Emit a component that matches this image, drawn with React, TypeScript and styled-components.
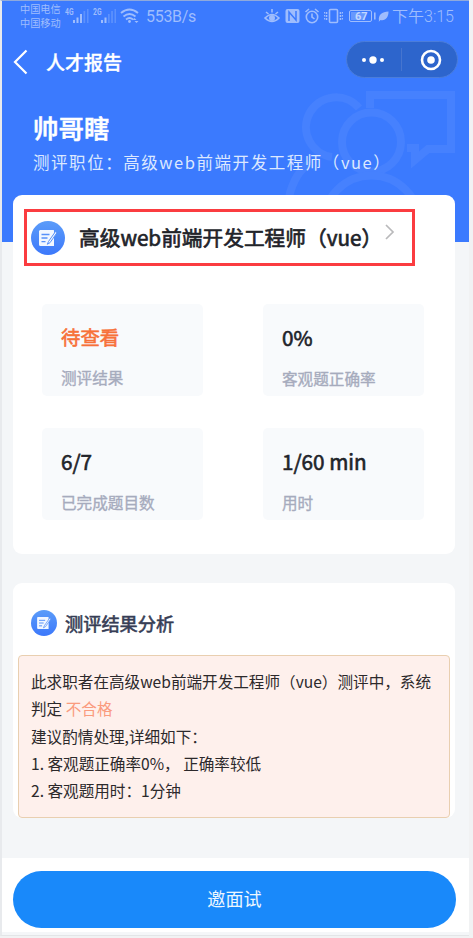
import React from 'react';
import styled, { createGlobalStyle } from 'styled-components';

const GlobalStyle = createGlobalStyle`
  * { box-sizing: border-box; }
  body {
    margin: 0;
    background: #f1f2f3;
    font-family: "Noto Sans CJK SC", sans-serif;
  }
`;

const Phone = styled.main`
  width: 469px;
  height: 936px;
  border-left: 2px solid #e8eaed;
  border-top: 1px solid #8fa9dc;
  border-bottom: 1px solid #e3e5e7;
  background: #f4f6f8;
  display: flex;
  flex-direction: column;
  white-space: nowrap;
  overflow: hidden;
`;

const Header = styled.header`
  position: relative;
  flex: none;
  height: 241px;
  background: #3b7afe;
  color: #fff;
`;

const Watermark = styled.svg`
  position: absolute;
  left: 278px;
  top: 84px;
`;

const StatusBar = styled.div`
  height: 32px;
  display: flex;
  justify-content: space-between;
  align-items: flex-start;
  padding: 0 15px 0 18px;
  color: #9fbdfd;
`;

const StatusGroup = styled.div`
  display: flex;
`;

const Carriers = styled.div`
  width: 43px;
  padding-top: 1px;
  font-size: 10.2px;
  line-height: 14px;
`;

const StatusText = styled.span<{ $light?: boolean }>`
  font-family: Roboto, "Noto Sans CJK SC", sans-serif;
  font-size: 16px;
  font-weight: ${(p) => (p.$light ? 350 : 400)};
  line-height: 31px;
  margin-left: ${(p) => (p.$light ? 0 : -1)}px;
  letter-spacing: ${(p) => (p.$light ? '0' : '-0.3px')};
`;

const NetLabel = styled.text`
  font: bold 9px Roboto, sans-serif;
`;

const NavBar = styled.nav`
  height: 58px;
  display: flex;
  align-items: center;
  padding: 0 11px 0 11px;
`;

const NavTitle = styled.h1`
  margin: 0 auto 0 18px;
  font-size: 19px;
  line-height: 28px;
  font-weight: 500;
  -webkit-text-stroke: 0.3px #fff;
`;

const Capsule = styled.div`
  width: 112px;
  height: 37px;
  margin-top: -5px;
  border: 1px solid #4b7dda;
  border-radius: 19px;
  background: #2d65cc;
`;

const Profile = styled.section`
  position: relative;
  padding: 17px 0 0 31px;
`;

const Name = styled.h2`
  margin: 0;
  font-size: 25.5px;
  line-height: 38px;
  font-weight: 500;
  -webkit-text-stroke: 0.5px #fff;
`;

const Position = styled.p`
  margin: 2px 0 0;
  font-size: 16.5px;
  line-height: 28px;
  letter-spacing: 1.55px;
  color: #dce8ff;
`;

const Card = styled.section<{ $height: number }>`
  position: relative;
  flex: none;
  width: 442px;
  height: ${(p) => p.$height}px;
  margin-left: 11px;
  border-radius: 9px;
  background: #fff;
`;

const SummaryCard = styled(Card)`
  margin-top: -47px;
  padding: 14px 0 0 11px;
`;

const JobLink = styled.div`
  width: 391px;
  height: 57px;
  border: 3px solid #fb3c40;
  padding-left: 4px;
  display: flex;
  align-items: center;
`;

const JobTitle = styled.h3`
  margin: -2px 3px 0 14px;
  font-size: 20.7px;
  line-height: 30px;
  font-weight: 400;
  color: #212329;
  -webkit-text-stroke: 0.65px #212329;
`;

const ChevronBox = styled.span`
  display: flex;
  padding-bottom: 11px;
`;

const Stats = styled.div`
  display: grid;
  grid-template-columns: 161px 161px;
  grid-auto-rows: 92px;
  gap: 32px 60px;
  margin: 38px 0 0 18px;
`;

const Stat = styled.div`
  padding: 18px 0 0 19px;
  border-radius: 5px;
  background: #f8fafc;
`;

const StatValue = styled.div<{ $accent?: boolean }>`
  font-size: ${(p) => (p.$accent ? 19.4 : 20.7)}px;
  line-height: ${(p) => (p.$accent ? 29 : 30)}px;
  color: ${(p) => (p.$accent ? '#f77139' : '#212329')};
  -webkit-text-stroke: 0.6px currentColor;
`;

const StatLabel = styled.div`
  margin-top: 14px;
  font-size: 15.6px;
  line-height: 24px;
  color: #a6abbd;
  -webkit-text-stroke: 0.35px currentColor;
`;

const AnalysisCard = styled(Card)`
  margin-top: 29px;
  padding: 26px 5px 0;
`;

const AnalysisHeading = styled.div`
  height: 28px;
  display: flex;
  align-items: center;
  gap: 8px;
  padding-left: 13px;
`;

const AnalysisTitle = styled.h3`
  margin: 0;
  font-size: 18.2px;
  line-height: 28px;
  font-weight: 400;
  color: #363d55;
  -webkit-text-stroke: 0.6px currentColor;
`;

const Notice = styled.div`
  width: 432px;
  height: 163px;
  margin-top: 18px;
  padding: 12px 0 0 12px;
  border: 1.5px solid #e9cfb0;
  border-radius: 4px;
  background: #fef0ec;
  color: #2c292b;
  font-size: 15.6px;
  line-height: 27.3px;
`;

const Verdict = styled.span`
  color: #fa9b7e;
`;

const Footer = styled.footer`
  flex: none;
  height: 74px;
  margin-top: 40px;
  padding: 13px 0 0 11px;
  background: #fff;
`;

const InviteButton = styled.button`
  display: block;
  width: 443px;
  height: 57px;
  border: 0;
  border-radius: 29px;
  background: #1989fa;
  color: #edf7ff;
  font-family: inherit;
  font-size: 18.1px;
  padding: 0 0 4px;
`;

function DocBadge({ size, id }: { size: number; id: string }) {
  return (
    <svg width={size} height={size} viewBox="0 0 34 34">
      <defs>
        <linearGradient id={id} x1="0" y1="0" x2="0" y2="1">
          <stop offset="0" stopColor="#5b9cf9" />
          <stop offset="1" stopColor="#3c78fb" />
        </linearGradient>
      </defs>
      <circle cx="17" cy="17" r="17" fill={`url(#${id})`} />
      <path d="M9 9h14l-1 1H9zM8 9.5h15v15.5H9.500q-1.500 0-1.500-1.500z" fill="#f2f7ff" />
      <path d="M10.500 13.500h8M10.500 17h6M10.500 20.700h4" stroke="#5791f9" strokeWidth="1.300" />
      <path d="M24.500 10.500l-7 10-1.200 2.800 2.700-1.600 7-10z" fill="#f2f7ff" stroke="#5791f9" strokeWidth="1" />
    </svg>
  );
}

function SignalIcons() {
  return (
    <svg width="84" height="30" viewBox="61 1 84 30" fill="currentColor">
      <NetLabel x="63" y="15" textLength="8.500" lengthAdjust="spacingAndGlyphs">4G</NetLabel>
      <path d="M71 20h2v3h-2zM74.500 17.500h2V23h-2zM78 14h2v9h-2z" />
      <path d="M81.500 11h1.700v12h-1.700zM85 9h1.500v14H85z" opacity=".35" />
      <NetLabel x="91" y="15" textLength="8.500" lengthAdjust="spacingAndGlyphs">2G</NetLabel>
      <path d="M99 20h2v3h-2zM102.500 17.500h2V23h-2z" />
      <path d="M106 14h1.700v9H106zM109.200 11h1.700v12h-1.700zM112.500 9h1.500v14h-1.500z" opacity=".35" />
      <g fill="none" stroke="currentColor" strokeWidth="1.900">
        <path d="M119 13q8.500-7 17 0M121.500 16.500q6-5 12 0M124 19.500q3.500-2.800 7 0" />
      </g>
      <circle cx="127.500" cy="21.500" r="1.400" />
      <path d="M130.500 20l2-2 2 2zM132.500 21h4l-2 2z" />
    </svg>
  );
}

function DeviceIcons() {
  return (
    <svg width="128" height="30" viewBox="265 1 128 30" fill="none" stroke="currentColor" strokeWidth="1.600">
      <path d="M266 18q7-7 14 0-7 7-14 0zM267 12l2.500 2M273 9v3.500M279 12l-2.500 2" />
      <circle cx="273" cy="18" r="2.200" fill="currentColor" />
      <rect x="286.500" y="9" width="14" height="14" rx="2" fill="currentColor" stroke="none" />
      <path d="M290 21v-9l7 8v-9" stroke="#3b7afe" strokeWidth="1.500" />
      <circle cx="313" cy="17" r="5.700" />
      <path d="M313 13.500V17l2.500 2M306.500 12l3.500-3M319.500 12L316 9" />
      <rect x="330.500" y="9.500" width="8" height="13" rx="1" />
      <path d="M327.500 12v8M341.500 12v8" strokeDasharray="2 1" />
      <path d="M325.500 12v8M343.500 12v8" strokeDasharray="1.500 1.500" strokeWidth="1" />
      <rect x="350.500" y="10.500" width="22" height="11" rx="1.500" strokeWidth="1" />
      <rect x="352" y="12" width="14" height="8" fill="currentColor" opacity=".45" stroke="none" />
      <path d="M375.800 12.500v7" strokeWidth="1.600" />
      <text x="356" y="20" fill="#c3d7ff" stroke="none" fontFamily="Roboto" fontWeight="700" fontSize="11">67</text>
      <path d="M380 21c-1-6 3-9.500 9.500-9.500 0 6-3 9.500-8 8.500l-2 2z" fill="currentColor" stroke="none" />
    </svg>
  );
}

const stats = [
  { value: '待查看', label: '测评结果', accent: true },
  { value: '0%', label: '客观题正确率' },
  { value: '6/7', label: '已完成题目数' },
  { value: '1/60 min', label: '用时' },
];

export default function App() {
  return (
    <>
      <GlobalStyle />
      <Phone>
        <Header>
          <Watermark width="189" height="112" viewBox="280 85 189 112" fill="none" stroke="#4681fe" strokeWidth="8">
            <path d="M359 108A30 30 0 1 0 332 157M289 197Q295 172 310 163" />
            <circle cx="371.500" cy="142" r="29.500" />
            <circle cx="371.500" cy="223.500" r="48" />
            <path d="M370 108V95H451V149H428L415 160V148H407" />
          </Watermark>
          <StatusBar>
            <StatusGroup>
              <Carriers>中国电信<br />中国移动</Carriers>
              <SignalIcons />
              <StatusText>553B/s</StatusText>
            </StatusGroup>
            <StatusGroup>
              <DeviceIcons />
              <StatusText $light>下午3:15</StatusText>
            </StatusGroup>
          </StatusBar>
          <NavBar>
            <svg width="15" height="26" viewBox="0 0 15 26" fill="none" stroke="#fff" strokeWidth="2.200">
              <path d="M13.500 1.500L2 13l11.500 11.500" />
            </svg>
            <NavTitle>人才报告</NavTitle>
            <Capsule>
              <svg width="109" height="35" viewBox="0 0 109 35" fill="#fff">
                <circle cx="17" cy="18" r="2" />
                <circle cx="26" cy="18" r="3.700" />
                <circle cx="35" cy="18" r="2" />
                <path d="M54.500 6v23" stroke="#4675cf" />
                <circle cx="84" cy="18" r="9" fill="none" stroke="#fff" strokeWidth="2.600" />
                <circle cx="84" cy="18" r="3.800" />
              </svg>
            </Capsule>
          </NavBar>
          <Profile>
            <Name>帅哥瞎</Name>
            <Position>测评职位：高级web前端开发工程师（vue）</Position>
          </Profile>
        </Header>
        <SummaryCard $height={359}>
          <JobLink>
            <DocBadge size={34} id="badge-job" />
            <JobTitle>高级web前端开发工程师（vue）</JobTitle>
            <ChevronBox>
              <svg width="10" height="16" viewBox="0 0 10 16" fill="none" stroke="#b9b9bb" strokeWidth="1.700">
                <path d="M1 1l7 7-7 7" />
              </svg>
            </ChevronBox>
          </JobLink>
          <Stats>
            {stats.map((s) => (
              <Stat key={s.label}>
                <StatValue $accent={s.accent}>{s.value}</StatValue>
                <StatLabel>{s.label}</StatLabel>
              </Stat>
            ))}
          </Stats>
        </SummaryCard>
        <AnalysisCard $height={235}>
          <AnalysisHeading>
            <DocBadge size={26} id="badge-analysis" />
            <AnalysisTitle>测评结果分析</AnalysisTitle>
          </AnalysisHeading>
          <Notice>
            此求职者在高级web前端开发工程师（vue）测评中，系统<br />
            判定 <Verdict>不合格</Verdict><br />
            建议酌情处理,详细如下：<br />
            1. 客观题正确率0%， 正确率较低<br />
            2. 客观题用时：1分钟
          </Notice>
        </AnalysisCard>
        <Footer>
          <InviteButton>邀面试</InviteButton>
        </Footer>
      </Phone>
    </>
  );
}
